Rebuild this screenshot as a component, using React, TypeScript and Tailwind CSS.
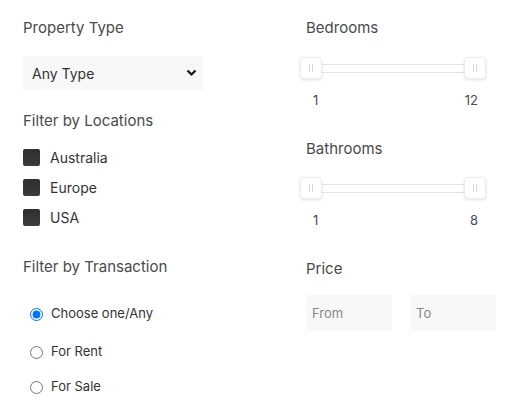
import { useState } from "react";

const font = { fontFamily: "Inter, 'Noto Sans', sans-serif" };

function RangeSlider({ min, max }: { min: number; max: number }) {
  return (
    <div className="ml-[-6px] w-[186px]">
      <div className="relative h-[22px] flex items-center">
        <div className="mx-[11px] h-[9px] flex-1 rounded-[2px] border border-[#e3e3e3] bg-white" />
        <Handle className="left-0" />
        <Handle className="right-0" />
      </div>
      <div className="mt-[13px] flex justify-between pl-[13px] pr-[8px] text-[13px] leading-4 text-[#4a4a5a]">
        <span>{min}</span>
        <span>{max}</span>
      </div>
    </div>
  );
}

function Handle({ className }: { className: string }) {
  return (
    <div
      className={`absolute top-0 flex h-[22px] w-[22px] items-center justify-center gap-[2px] rounded-[4px] border border-[#ececec] bg-white shadow-[0_1px_3px_rgba(0,0,0,0.12)] ${className}`}
    >
      <span className="h-[8px] w-px bg-[#d6d6d6]" />
      <span className="h-[8px] w-px bg-[#d6d6d6]" />
    </div>
  );
}

export default function App() {
  const [tx, setTx] = useState("any");
  const locations = ["Australia", "Europe", "USA"];
  const radios = [
    { id: "any", label: "Choose one/Any", mt: "mt-[27px]" },
    { id: "rent", label: "For Rent", mt: "mt-[18px]" },
    { id: "sale", label: "For Sale", mt: "mt-[15px]" },
  ];

  return (
    <div className="flex h-[414px] w-[509px] bg-white pl-[23px] pt-[18px] text-[#4a4a4a]" style={font}>
      {/* left column */}
      <div className="flex w-[283px] flex-col">
        <h3 className="h-5 text-[15px] leading-5 font-normal">Property Type</h3>
        <div className="relative mt-[18px] h-[34px] w-[180px] bg-[#f8f8f8]">
          <select className="h-full w-full appearance-none bg-transparent pl-[9px] text-[14px] text-[#333] outline-none">
            <option>Any Type</option>
          </select>
          <svg
            className="pointer-events-none absolute right-[6px] top-[13px]"
            width="11"
            height="8"
            viewBox="0 0 11 8"
          >
            <path d="M1.5 1.5 L5.5 5.5 L9.5 1.5" stroke="#111" strokeWidth="2.2" fill="none" />
          </svg>
        </div>

        <h3 className="mt-[21px] h-5 text-[15px] leading-5 font-normal">Filter by Locations</h3>
        <div className="mt-[11px] flex flex-col">
          {locations.map((l) => (
            <label key={l} className="flex h-[30px] items-center gap-[10px]">
              <span className="h-[17px] w-[17px] rounded-[2px] bg-gradient-to-b from-[#2e2e2e] to-[#3c3c40]" />
              <span className="text-[14px] text-[#333]">{l}</span>
            </label>
          ))}
        </div>

        <h3 className="mt-[25px] h-5 text-[15px] leading-5 font-normal">Filter by Transaction</h3>
        {radios.map((r) => (
          <label key={r.id} className={`${r.mt} flex h-5 items-center`}>
            <input
              type="radio"
              name="tx"
              checked={tx === r.id}
              onChange={() => setTx(r.id)}
              className="m-0 ml-[7px] h-[13px] w-[13px]"
            />
            <span className="ml-[8px] text-[13px] text-[#333]">{r.label}</span>
          </label>
        ))}
      </div>

      {/* right column */}
      <div className="flex flex-col">
        <h3 className="h-5 text-[15px] leading-5 font-normal">Bedrooms</h3>
        <div className="mt-[19px]">
          <RangeSlider min={1} max={12} />
        </div>

        <h3 className="mt-[31px] h-5 text-[15px] leading-5 font-normal">Bathrooms</h3>
        <div className="mt-[18px]">
          <RangeSlider min={1} max={8} />
        </div>

        <h3 className="mt-[31px] h-5 text-[15px] leading-5 font-normal">Price</h3>
        <div className="mt-[16px] flex gap-[18px]">
          <input
            placeholder="From"
            className="h-[36px] w-[86px] bg-[#f8f8f8] pl-[6px] text-[13px] outline-none placeholder:text-[#888]"
          />
          <input
            placeholder="To"
            className="h-[36px] w-[86px] bg-[#f8f8f8] pl-[6px] text-[13px] outline-none placeholder:text-[#888]"
          />
        </div>
      </div>
    </div>
  );
}
